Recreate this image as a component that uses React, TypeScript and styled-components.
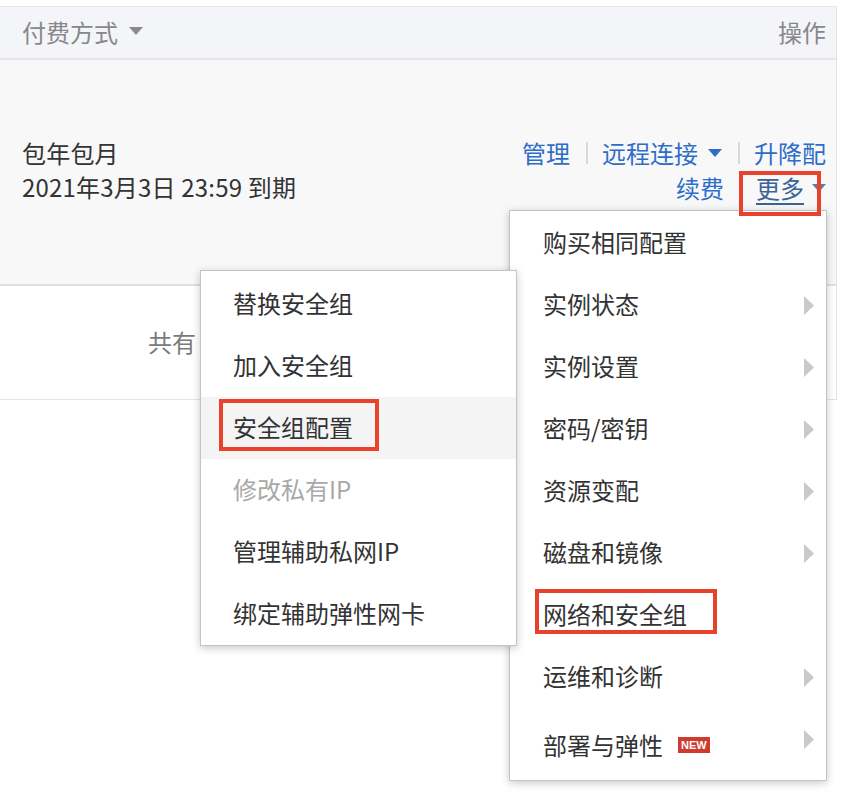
import styled, { createGlobalStyle } from 'styled-components';

const GlobalStyle = createGlobalStyle`
  html, body {
    margin: 0;
    padding: 0;
    background: #ffffff;
  }
  body {
    font-family: "Noto Sans CJK SC", "Noto Sans", sans-serif;
    -webkit-font-smoothing: antialiased;
  }
`;

const Page = styled.div`
  position: relative;
  width: 854px;
  height: 794px;
  padding-top: 6px;
  box-sizing: border-box;
  overflow: hidden;
`;

const Table = styled.div`
  width: 837px;
  border-right: 1px solid #e1e3e8;
  box-sizing: border-box;
`;

const HeadRow = styled.div`
  height: 54px;
  box-sizing: border-box;
  border-top: 1px solid #e3e5ea;
  border-bottom: 2px solid #e3e5ea;
  background: #f4f5f8;
  display: flex;
  align-items: center;
  justify-content: space-between;
  padding: 0 10px 3px 22px;
  color: #888888;
  font-size: 24px;
`;

const HeadCell = styled.div`
  display: flex;
  align-items: center;
  gap: 11px;
`;

const BodyRow = styled.div`
  height: 226px;
  box-sizing: border-box;
  background: #f8f8f9;
  border-bottom: 2px solid #dfe0e3;
  display: flex;
  align-items: center;
  justify-content: space-between;
  padding: 0 10px 4px 22px;
`;

const InfoCell = styled.div`
  display: flex;
  flex-direction: column;
  font-size: 24px;
  line-height: 34px;
  letter-spacing: 0.2px;
  color: #333333;
`;

const ActionCell = styled.div`
  display: flex;
  flex-direction: column;
  align-items: flex-end;
  font-size: 24px;
  line-height: 35px;
`;

const ActionLine = styled.div`
  display: flex;
  align-items: center;
`;

const ActionLink = styled.span<{ $gap?: number }>`
  color: #2d6dc8;
  margin-right: ${({ $gap }) => $gap ?? 0}px;
  display: inline-flex;
  align-items: center;
  gap: 10px;
`;

const MoreLink = styled.span`
  color: #3a6396;
  display: inline-flex;
  align-items: center;
  gap: 8px;
  span {
    text-decoration: underline;
    text-underline-offset: 5px;
    text-decoration-thickness: 2px;
  }
`;

const Divider = styled.span`
  width: 2px;
  height: 22px;
  background: #d9d9d9;
  margin: 0 14px 0 16px;
`;

const PagerRow = styled.div`
  height: 114px;
  box-sizing: border-box;
  border-bottom: 1px solid #e3e5ea;
  display: flex;
  align-items: center;
  padding: 0 0 3px 148px;
  font-size: 24px;
  color: #7a7a7a;
  white-space: nowrap;
  overflow: hidden;
`;

const MenuPanel = styled.div`
  position: absolute;
  box-sizing: border-box;
  width: 318px;
  background: #ffffff;
  border: 1px solid #c4c4c4;
  box-shadow: 0 2px 8px rgba(0, 0, 0, 0.22);
  font-size: 24px;
`;

const MainMenu = styled(MenuPanel)`
  left: 509px;
  top: 210px;
  height: 571px;
  padding-top: 1px;
  z-index: 1;
`;

const SubMenu = styled(MenuPanel)`
  left: 200px;
  top: 270px;
  width: 317px;
  height: 376px;
  padding-top: 2px;
  z-index: 2;
`;

const MenuItem = styled.div<{ $active?: boolean; $disabled?: boolean; $indent: number }>`
  height: 62px;
  display: flex;
  align-items: center;
  padding: 0 12px 0 ${({ $indent }) => $indent}px;
  background: ${({ $active }) => ($active ? '#f4f4f4' : 'transparent')};
  color: ${({ $disabled }) => ($disabled ? '#a8a8a8' : '#333333')};
`;

const ItemLabel = styled.span<{ $drop?: number }>`
  padding-top: ${({ $drop }) => $drop ?? 0}px;
  padding-bottom: 4px;
`;

const NewBadge = styled.span`
  margin: 12px 0 0 15px;
  height: 16px;
  padding: 0 3px;
  background: #d13b2d;
  color: #ffffff;
  font-family: "Liberation Sans", Arial, sans-serif;
  font-weight: bold;
  font-size: 11px;
  line-height: 16px;
`;

const ArrowSlot = styled.span`
  margin-left: auto;
  display: flex;
`;

const Mark = styled.div<{ $x: number; $y: number; $w: number; $h: number }>`
  position: absolute;
  left: ${({ $x }) => $x}px;
  top: ${({ $y }) => $y}px;
  width: ${({ $w }) => $w}px;
  height: ${({ $h }) => $h}px;
  box-sizing: border-box;
  border: 4px solid #e8412c;
  z-index: 3;
`;

const Caret = ({ color }: { color: string }) => (
  <svg width="14" height="8" viewBox="0 0 14 8">
    <polygon points="0,0 14,0 7,8" fill={color} />
  </svg>
);

const SubArrow = () => (
  <svg width="10" height="19" viewBox="0 0 10 19">
    <polygon points="0,0 10,9.5 0,19" fill="#c9c9c9" />
  </svg>
);

const mainItems = [
  { label: '购买相同配置', arrow: false },
  { label: '实例状态', arrow: true },
  { label: '实例设置', arrow: true },
  { label: '密码/密钥', arrow: true },
  { label: '资源变配', arrow: true },
  { label: '磁盘和镜像', arrow: true },
  { label: '网络和安全组', arrow: false },
  { label: '运维和诊断', arrow: true },
];

const subItems = [
  { label: '替换安全组' },
  { label: '加入安全组' },
  { label: '安全组配置', active: true },
  { label: '修改私有IP', disabled: true },
  { label: '管理辅助私网IP' },
  { label: '绑定辅助弹性网卡' },
];

export default function App() {
  return (
    <>
      <GlobalStyle />
      <Page>
        <Table>
          <HeadRow>
            <HeadCell>
              付费方式
              <Caret color="#8a8a8a" />
            </HeadCell>
            <HeadCell>操作</HeadCell>
          </HeadRow>
          <BodyRow>
            <InfoCell>
              <span>包年包月</span>
              <span>2021年3月3日 23:59 到期</span>
            </InfoCell>
            <ActionCell>
              <ActionLine>
                <ActionLink>管理</ActionLink>
                <Divider />
                <ActionLink>
                  远程连接
                  <Caret color="#2d6dc8" />
                </ActionLink>
                <Divider />
                <ActionLink>升降配</ActionLink>
              </ActionLine>
              <ActionLine>
                <ActionLink $gap={32}>续费</ActionLink>
                <MoreLink>
                  <span>更多</span>
                  <Caret color="#5a7ea8" />
                </MoreLink>
              </ActionLine>
            </ActionCell>
          </BodyRow>
          <PagerRow>共有 1 条，每页显示 10 条</PagerRow>
        </Table>

        <MainMenu>
          {mainItems.map((item) => (
            <MenuItem key={item.label} $indent={33}>
              <ItemLabel>{item.label}</ItemLabel>
              {item.arrow && (
                <ArrowSlot>
                  <SubArrow />
                </ArrowSlot>
              )}
            </MenuItem>
          ))}
          <MenuItem $indent={33}>
            <ItemLabel $drop={14}>部署与弹性</ItemLabel>
            <NewBadge>NEW</NewBadge>
            <ArrowSlot>
              <SubArrow />
            </ArrowSlot>
          </MenuItem>
        </MainMenu>

        <SubMenu>
          {subItems.map((item) => (
            <MenuItem
              key={item.label}
              $indent={32}
              $active={item.active}
              $disabled={item.disabled}
            >
              <ItemLabel>{item.label}</ItemLabel>
            </MenuItem>
          ))}
        </SubMenu>

        <Mark $x={739} $y={171} $w={82} $h={45} />
        <Mark $x={219} $y={399} $w={160} $h={52} />
        <Mark $x={535} $y={589} $w={182} $h={45} />
      </Page>
    </>
  );
}
